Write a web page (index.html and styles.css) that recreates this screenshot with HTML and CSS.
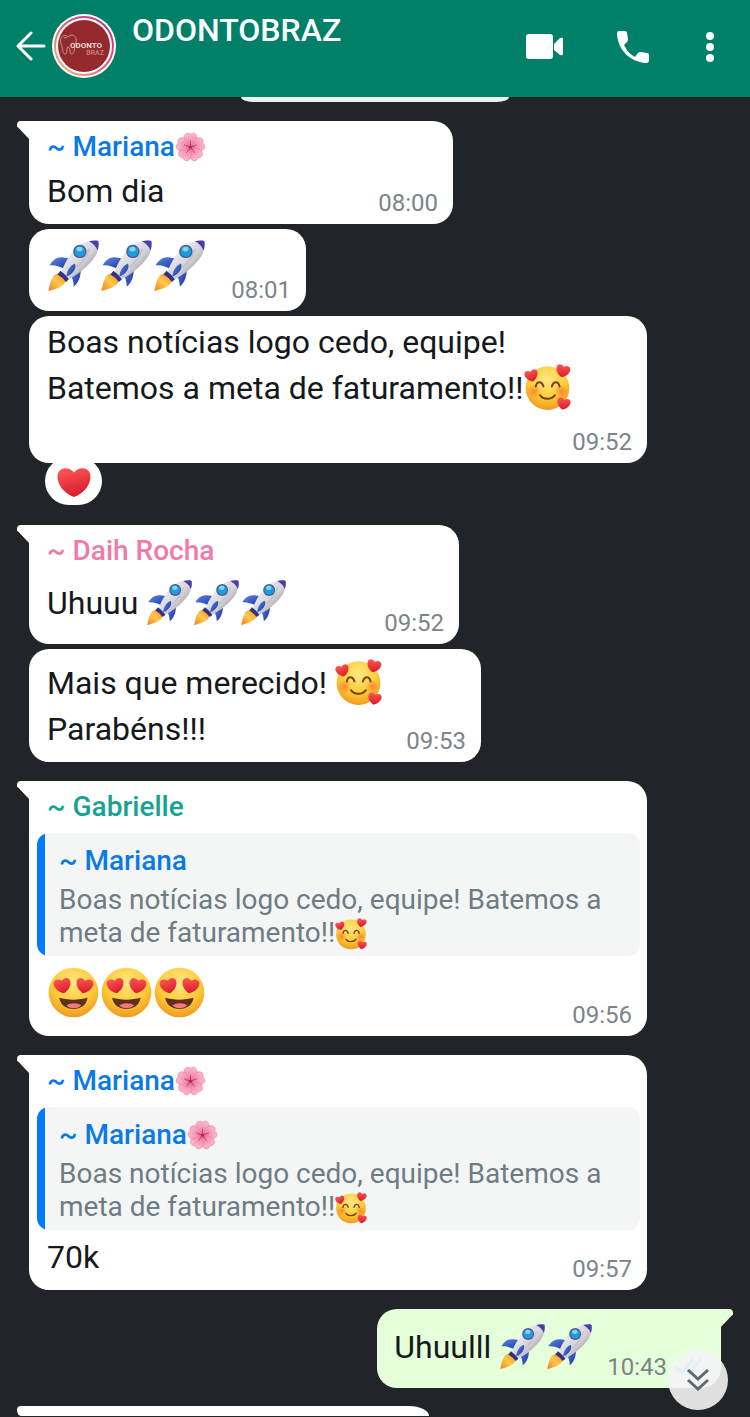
FILE: index.html
```html
<!DOCTYPE html>
<html lang="pt-BR">
<head>
<meta charset="utf-8">
<meta name="viewport" content="width=device-width, initial-scale=1">
<title>ODONTOBRAZ</title>
<link rel="stylesheet" href="styles.css">
</head>
<body>
<svg class="sprite" aria-hidden="true">
  <defs>
    <linearGradient id="hull" x1="0" y1="0" x2="1" y2="1"><stop offset="0.2" stop-color="#f1f0f3"/><stop offset="0.55" stop-color="#d3d2d8"/><stop offset="0.85" stop-color="#8f8e99"/></linearGradient>
    <linearGradient id="fin" x1="0" y1="0" x2="1" y2="1"><stop offset="0" stop-color="#5a8ae6"/><stop offset="0.6" stop-color="#3452b8"/><stop offset="1" stop-color="#33309a"/></linearGradient>
    <linearGradient id="flame" x1="1" y1="0" x2="0" y2="1"><stop offset="0" stop-color="#f58a1f"/><stop offset="0.5" stop-color="#ffc94a"/><stop offset="1" stop-color="#f0801c"/></linearGradient>
    <radialGradient id="face" cx="0.5" cy="0.3" r="0.7"><stop offset="0" stop-color="#ffe884"/><stop offset="0.6" stop-color="#fecb38"/><stop offset="1" stop-color="#f09a20"/></radialGradient>
    <radialGradient id="blush"><stop offset="0" stop-color="#f7742c" stop-opacity="0.8"/><stop offset="1" stop-color="#f7842c" stop-opacity="0"/></radialGradient>
    <linearGradient id="love" x1="0" y1="0" x2="0.3" y2="1"><stop offset="0" stop-color="#ff5a56"/><stop offset="1" stop-color="#da1f2f"/></linearGradient>
    <radialGradient id="petal" cx="0.5" cy="0.95" r="0.95"><stop offset="0" stop-color="#e4457c"/><stop offset="0.3" stop-color="#f08aac"/><stop offset="1" stop-color="#fbb9cc"/></radialGradient>
    <linearGradient id="ring" x1="1" y1="0" x2="0" y2="1"><stop offset="0" stop-color="#b52b8c"/><stop offset="0.5" stop-color="#dd5f78"/><stop offset="1" stop-color="#f3c27d"/></linearGradient>
    <path id="heart-shape" d="M0 17C-9 13-17 6-18-4C-19-15-7-18 0-10C7-18 19-15 18-4C17 6 9 13 0 17Z"/>
    <path id="petal-shape" d="M0 0C-9-10-21-18-19-31C-17-42-7-44 0-38C7-44 17-42 19-31C21-18 9-10 0 0Z"/>
  </defs>
  <symbol id="rocket" viewBox="-4 -4 158 158">
    <path d="M14 108C23 96 39 97 49 106C58 118 49 131 36 138C24 144 11 148 0 151C3 137 7 119 14 108Z" fill="url(#flame)"/>
    <path d="M4 74C13 59 27 48 44 51L73 55L53 87C37 79 22 73 4 74Z" fill="url(#fin)"/>
    <path d="M96 78C98 99 95 122 76 138C75 122 72 110 64 102Z" fill="url(#fin)"/>
    <path d="M38 98C47 66 72 29 98 11C113 2 131 0 149 2C151 18 148 34 139 49C121 76 86 105 56 118Z" fill="url(#hull)"/>
    <path d="M36 91C46 98 55 107 61 117L52 124C45 114 36 107 27 102Z" fill="#363083"/>
    <path d="M121 3C130 0 141 0 149 2C151 10 150 20 147 30C142 18 132 8 121 3Z" fill="#493fab"/>
    <path d="M54 108C54 91 65 75 79 69C87 83 70 103 54 108Z" fill="url(#fin)"/>
    <circle cx="94" cy="33" r="20" fill="#505693"/>
    <circle cx="94" cy="33" r="16" fill="#219bd9"/>
    <ellipse cx="93" cy="26" rx="9" ry="7" fill="#7ed8f5"/>
    <path d="M122 25C116 46 101 66 84 80" fill="none" stroke="#b7b6bf" stroke-width="5" opacity="0.6"/>
  </symbol>
  <symbol id="adore" viewBox="-2 -2 140 140">
    <circle cx="68" cy="70" r="65" fill="url(#face)"/>
    <circle cx="27" cy="80" r="22" fill="url(#blush)"/><circle cx="110" cy="80" r="22" fill="url(#blush)"/>
    <path d="M33 65C36 48 51 48 56 65M81 65C86 48 100 48 104 65" fill="none" stroke="#75451d" stroke-width="6" stroke-linecap="round"/>
    <path d="M46 91C55 105 80 105 90 91" fill="none" stroke="#70401e" stroke-width="6" stroke-linecap="round"/>
    <g fill="url(#love)"><use href="#heart-shape" transform="translate(20 32) rotate(-14) scale(1.1)"/><use href="#heart-shape" transform="translate(114 18) rotate(14) scale(1.15)"/><use href="#heart-shape" transform="translate(116 116) rotate(12) scale(1.1)"/></g>
  </symbol>
  <symbol id="heart-eyes" viewBox="-4 -4 158 158">
    <circle cx="75" cy="75" r="74" fill="url(#face)"/>
    <path d="M32 91C55 98 94 98 117 91C113 114 96 124 75 124C53 124 37 114 32 91Z" fill="#5f311c"/>
    <path d="M54 113C65 105 88 105 98 113C89 124 62 125 54 113Z" fill="#f27a78"/>
    <g fill="url(#love)"><use href="#heart-shape" transform="translate(42 54) rotate(-10) scale(1.4)"/><use href="#heart-shape" transform="translate(108 54) rotate(10) scale(1.4)"/></g>
  </symbol>
  <symbol id="flower" viewBox="-46 -45 92 92">
    <g fill="url(#petal)" stroke="#e9809f" stroke-width="2"><use href="#petal-shape"/><use href="#petal-shape" transform="rotate(72)"/><use href="#petal-shape" transform="rotate(144)"/><use href="#petal-shape" transform="rotate(216)"/><use href="#petal-shape" transform="rotate(288)"/></g>
    <path d="M0 0V-20M0 0L19-7M0 0L12 17M0 0L-12 17M0 0L-19-7" stroke="#bd2458" stroke-width="2"/>
    <circle r="4" fill="#b52356"/>
  </symbol>
  <symbol id="heart" viewBox="-18 -17 36 35"><use href="#heart-shape" fill="url(#love)"/></symbol>
</svg>

<header class="topbar">
  <button class="icon-button back" aria-label="Voltar">
    <svg width="30" height="30" viewBox="0 0 30 30" fill="none" stroke="#fff" stroke-width="3" stroke-linecap="round" stroke-linejoin="round"><path d="M28 15H3M15 2L2 15L15 28"/></svg>
  </button>
  <svg class="avatar" viewBox="0 0 64 64" role="img" aria-label="Odonto Braz">
    <circle cx="32" cy="32" r="32" fill="#fff"/>
    <circle cx="32" cy="32" r="29" fill="none" stroke="url(#ring)" stroke-width="2"/>
    <circle cx="32" cy="32" r="26" fill="#952a2e"/>
    <path d="M15 22C11 20 7 24 9 30C11 33 10 40 13 40C16 40 14 33 16 33C19 33 17 41 20 40C23 39 22 34 23 31C25 27 25 22 20 21C17 21 16 24 12 24" fill="none" stroke="#cb9383" stroke-width="1"/>
    <text class="logo-main" x="18" y="34">ODONTO</text>
    <text class="logo-sub" x="52" y="41">BRAZ</text>
  </svg>
  <h1 class="title">ODONTOBRAZ</h1>
  <nav class="actions">
    <button class="icon-button" aria-label="Chamada de vídeo"><svg width="38" height="26" viewBox="0 0 38 26" fill="#fff"><rect width="27" height="25" rx="3"/><path d="M28 10L34 4Q37 3 37 5V20Q37 22 34 21L28 16Z"/></svg></button>
    <button class="icon-button" aria-label="Ligar"><svg width="32" height="32" viewBox="0 0 32 32" fill="#fff"><path d="M2 0H8Q10 0 10 2L11 8Q11 10 10 11L7 14C10 20 13 23 18 26L21 22Q22 21 24 21L30 22Q32 22 32 24V29Q32 32 29 32C13 31 1 19 0 3Q0 0 2 0Z"/></svg></button>
    <button class="icon-button menu" aria-label="Mais opções"><svg width="8" height="30" viewBox="0 0 8 30" fill="#fff"><circle cx="4" cy="4" r="4"/><circle cx="4" cy="15" r="4"/><circle cx="4" cy="26" r="4"/></svg></button>
  </nav>
</header>

<main class="chat">
  <div class="date-peek"></div>

  <article class="bubble first w-medium">
    <h2 class="name blue">~ Mariana<svg class="emoji-name"><use href="#flower"/></svg></h2>
    <div class="row"><p class="text">Bom dia</p><time class="time">08:00</time></div>
  </article>
  <article class="bubble w-small">
    <div class="row big"><p class="emojis"><svg class="emoji-big"><use href="#rocket"/></svg><svg class="emoji-big"><use href="#rocket"/></svg><svg class="emoji-big"><use href="#rocket"/></svg></p><time class="time">08:01</time></div>
  </article>
  <article class="bubble w-full reacted">
    <p class="text lead">Boas notícias logo cedo, equipe!<br>Batemos a meta de faturamento!!<svg class="emoji"><use href="#adore"/></svg></p>
    <div class="row end"><time class="time">09:52</time></div>
    <button class="reaction" aria-label="Reação: coração"><svg width="34" height="32"><use href="#heart"/></svg></button>
  </article>

  <article class="bubble first w-rocha">
    <h2 class="name pink">~ Daih Rocha</h2>
    <div class="row spaced"><p class="text tall">Uhuuu <svg class="emoji"><use href="#rocket"/></svg><svg class="emoji"><use href="#rocket"/></svg><svg class="emoji"><use href="#rocket"/></svg></p><time class="time">09:52</time></div>
  </article>
  <article class="bubble w-large">
    <div class="row padded"><p class="text">Mais que merecido! <svg class="emoji"><use href="#adore"/></svg><br>Parabéns!!!</p><time class="time">09:53</time></div>
  </article>

  <article class="bubble first w-full">
    <h2 class="name teal">~ Gabrielle</h2>
    <blockquote class="quote">
      <h3 class="quote-name">~ Mariana</h3>
      <p class="quote-text">Boas notícias logo cedo, equipe! Batemos a meta de faturamento!!<svg class="emoji-quote"><use href="#adore"/></svg></p>
    </blockquote>
    <div class="row big"><p class="emojis"><svg class="emoji-big"><use href="#heart-eyes"/></svg><svg class="emoji-big"><use href="#heart-eyes"/></svg><svg class="emoji-big"><use href="#heart-eyes"/></svg></p><time class="time">09:56</time></div>
  </article>

  <article class="bubble first w-full">
    <h2 class="name blue">~ Mariana<svg class="emoji-name"><use href="#flower"/></svg></h2>
    <blockquote class="quote">
      <h3 class="quote-name">~ Mariana<svg class="emoji-name"><use href="#flower"/></svg></h3>
      <p class="quote-text">Boas notícias logo cedo, equipe! Batemos a meta de faturamento!!<svg class="emoji-quote"><use href="#adore"/></svg></p>
    </blockquote>
    <div class="row after-quote"><p class="text">70k</p><time class="time">09:57</time></div>
  </article>

  <article class="bubble first own">
    <div class="row"><p class="text tall">Uhuulll <svg class="emoji"><use href="#rocket"/></svg><svg class="emoji"><use href="#rocket"/></svg></p>
    <time class="time">10:43</time><svg class="ticks" width="28" height="18" viewBox="0 0 28 18" fill="none" stroke="#53bdeb" stroke-width="3"><path d="M1 10L7 16L18 2M12 14L14 16L26 2"/></svg></div>
  </article>
  <div class="next-peek"></div>
  <button class="jump" aria-label="Ir para o fim"><svg width="22" height="22" viewBox="0 0 22 22" fill="none" stroke="#5d6a71" stroke-width="3"><path d="M1 1L11 10L21 1M1 11L11 20L21 11"/></svg></button>
</main>
</body>
</html>
```

FILE: styles.css
```css
* { box-sizing: border-box; }
body {
  margin: 0;
  min-height: 100vh;
  display: flex;
  flex-direction: column;
  background: #212429;
  color: #15191c;
  font-family: Roboto, "Liberation Sans", sans-serif;
}
h1, h2, h3, p, blockquote { margin: 0; font-weight: 400; }
button { border: 0; padding: 0; background: none; font: inherit; cursor: pointer; }
svg { display: block; flex: none; }
.sprite { position: absolute; width: 0; height: 0; }

.topbar {
  display: flex;
  align-items: center;
  height: 97px;
  padding: 0 36px 5px 16px;
  background: #008069;
}
.avatar { width: 64px; height: 64px; margin-left: 6px; }
.logo-main { font: 700 8px Roboto, sans-serif; fill: #ecd8cf; }
.logo-sub { font: 500 7px Roboto, sans-serif; fill: #c98478; text-anchor: end; }
.title {
  flex: 1;
  align-self: flex-start;
  margin: 10px 0 0 16px;
  color: #fff;
  font-size: 32px;
  font-weight: 500;
  line-height: 40px;
}
.actions { display: flex; align-items: center; gap: 53px; padding-top: 2px; }
.menu { margin-left: 4px; }

.chat {
  position: relative;
  flex: 1;
  display: flex;
  flex-direction: column;
  align-items: flex-start;
  gap: 5px;
  padding: 0 29px 2px;
}
.date-peek {
  align-self: center;
  width: 268px;
  height: 5px;
  border-radius: 0 0 12px 12px / 0 0 5px 5px;
  background: #eef1ef;
}

.bubble {
  position: relative;
  max-width: calc(100% - 74px);
  padding: 0 15px 0 18px;
  border-radius: 20px;
  background: #fff;
}
.first { margin-top: 14px; padding-top: 7px; border-top-left-radius: 0; }
.first::before {
  content: "";
  position: absolute;
  top: 0;
  left: -12px;
  width: 13px;
  height: 19px;
  border-top-left-radius: 4px;
  background: inherit;
  clip-path: polygon(0 0, 100% 0, 100% 100%, 0 28%);
}
.w-small { min-width: 277px; }
.w-medium { min-width: 424px; }
.w-rocha { min-width: 430px; }
.w-large { min-width: 452px; }
.w-full { width: 100%; }

.name, .quote-name { display: flex; align-items: center; font-size: 28px; font-weight: 500; }
.name { line-height: 38px; }
.blue, .quote-name { color: #0b7ae6; }
.pink { color: #f07ba8; }
.teal { color: #16a392; }

.row { display: flex; align-items: flex-end; justify-content: space-between; gap: 16px; padding: 2px 0 7px; }
.text { margin-bottom: 3px; font-size: 32px; line-height: 46px; }
.tall { margin-bottom: 5px; line-height: 58px; }
.lead { padding-top: 3px; }
.end { justify-content: flex-end; padding-top: 14px; }
.spaced { padding-top: 4px; }
.big { padding-top: 10px; }
.padded { padding-top: 11px; }
.after-quote { padding-top: 4px; }
.emojis { display: flex; margin-bottom: 12px; }
.quote + .big .emojis { margin-bottom: 10px; }
.time { color: #7b858a; font-size: 24px; line-height: 28px; }

.emoji, .emoji-quote { display: inline-block; }
.emoji { width: 47px; height: 47px; margin: -8px 0; vertical-align: -4px; }
.emoji-big { width: 53px; height: 53px; }
.emoji-name { width: 31px; height: 31px; }
.emoji-quote { width: 32px; height: 32px; margin: -8px 0; vertical-align: 0; }

.quote {
  margin: 7px -8px 0 -10px;
  padding: 11px 32px 7px 22px;
  border-radius: 12px;
  background: linear-gradient(90deg, #007bfc 8px, #f4f6f6 8px);
}
.quote-name { line-height: 34px; height: 34px; }
.quote-text { margin-top: 5px; color: #6f7c84; font-size: 28px; line-height: 33px; }

.reacted { margin-bottom: 43px; }
.reaction {
  position: absolute;
  left: 16px;
  bottom: -42px;
  display: grid;
  place-items: center;
  width: 57px;
  height: 48px;
  padding-top: 2px;
  border-radius: 24px;
  background: #fff;
}

.own { align-self: flex-end; padding: 7px 18px 0 17px; border-radius: 20px 0 20px 20px; background: #e5ffdb; }
.own::before { left: auto; right: -12px; border-radius: 0 4px 0 0; clip-path: polygon(0 0, 100% 0, 100% 28%, 0 100%); }
.own .row { gap: 8px; }
.own .time { margin-left: 6px; }
.ticks { margin-bottom: 6px; }
.next-peek {
  width: 412px;
  height: 10px;
  margin: 13px 0 0 -12px;
  border-radius: 4px 20px 0 4px / 4px 10px 0 6px;
  background: #fff;
}
.jump {
  position: absolute;
  right: 22px;
  bottom: 8px;
  display: grid;
  place-items: center;
  width: 60px;
  height: 60px;
  border-radius: 50%;
  background: rgba(244, 244, 244, 0.9);
}
```
